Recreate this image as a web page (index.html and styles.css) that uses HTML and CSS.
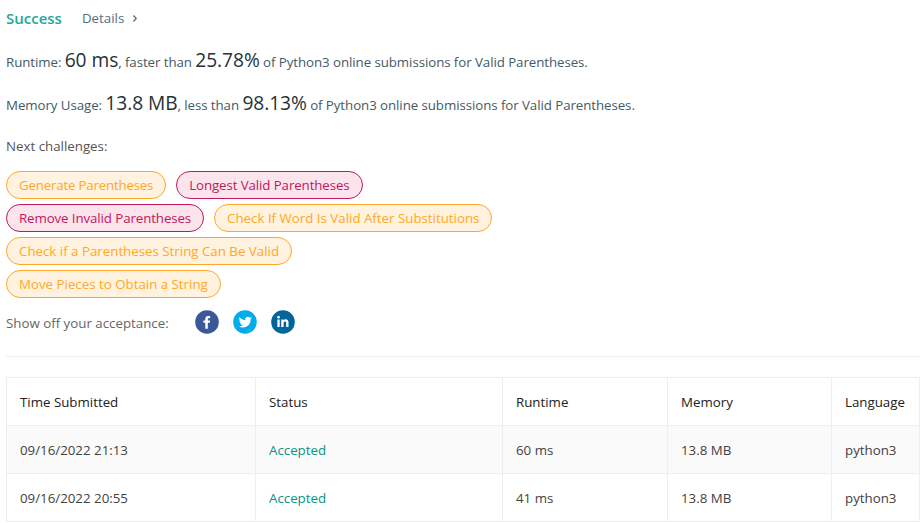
FILE: index.html
```html
<!DOCTYPE html>
<html lang="en">
<head>
  <meta charset="UTF-8">
  <meta name="viewport" content="width=device-width, initial-scale=1.0">
  <title>Submission Result</title>
  <link rel="stylesheet" href="styles.css">
</head>
<body>
  <div class="result">
    <div class="result-header">
      <span class="success">Success</span>
      <a class="details">Details
        <svg width="6" height="8" viewBox="0 0 6 8"><path d="M1.5 1.500 L4.2 4.500 L1.5 7.500" fill="none" stroke="currentColor" stroke-width="1.3"/></svg>
      </a>
    </div>
    <p class="info">Runtime: <span class="data">60 ms</span>, faster than <span class="data">25.78%</span> of Python3 online submissions for Valid Parentheses.</p>
    <p class="info">Memory Usage: <span class="data">13.8 MB</span>, less than <span class="data">98.13%</span> of Python3 online submissions for Valid Parentheses.</p>
    <p class="next">Next challenges:</p>
    <div class="challenges">
      <a class="tag medium tighter">Generate Parentheses</a>
      <a class="tag hard tight">Longest Valid Parentheses</a>
      <a class="tag hard tight">Remove Invalid Parentheses</a>
      <a class="tag medium">Check If Word Is Valid After Substitutions</a>
      <a class="tag medium">Check if a Parentheses String Can Be Valid</a>
      <a class="tag medium">Move Pieces to Obtain a String</a>
    </div>
    <div class="share">
      <span class="share-label">Show off your acceptance:</span>
      <svg class="social" viewBox="0 0 24 24">
        <circle cx="12" cy="12" r="11.8" fill="#3b5998"/>
        <path d="M10.3 18.8v-6H8.4v-2.300h1.900V9c0-2 1-3 2.900-3h1.900v2.200h-1.300c-.7 0-1 .3-1 1v1.300h2.300l-.3 2.300h-2v6z" fill="#fff"/>
      </svg>
      <svg class="social" viewBox="0 0 24 24">
        <circle cx="12" cy="12" r="11.8" fill="#00aced"/>
        <path transform="translate(5.200 5.200) scale(.58)" d="M23.6 4.9c-.8.4-1.7.6-2.7.8 1-.6 1.700-1.500 2.100-2.600-.9.5-1.900.9-3 1.100a4.700 4.700 0 0 0-8 4.300C8 8.300 4.600 6.400 2.300 3.600c-1.200 2.100-.6 4.800 1.500 6.200-.8 0-1.500-.2-2.100-.6 0 2.200 1.500 4.200 3.800 4.700-.7.2-1.400.2-2.100.1.600 1.900 2.300 3.200 4.400 3.300A9.500 9.500 0 0 1 .8 19.200 13.400 13.400 0 0 0 21.300 7.300c.9-.6 1.700-1.500 2.300-2.400z" fill="#fff"/>
      </svg>
      <svg class="social" viewBox="0 0 24 24">
        <circle cx="12" cy="12" r="11.8" fill="#006699"/>
        <path d="M6.400 9.500h2.300v7.500H6.400zM10.200 9.500h2.200v1c.5-.8 1.200-1.200 2.200-1.200 2.100 0 2.900 1.300 2.900 3.300V17h-2.300v-4c0-1-.4-1.600-1.200-1.600-.9 0-1.400.6-1.400 1.700V17h-2.400z" fill="#fff"/>
        <circle cx="7.550" cy="7.200" r="1.350" fill="#fff"/>
      </svg>
    </div>
  </div>

  <table class="submissions">
    <thead>
      <tr>
        <th class="col-time">Time Submitted</th>
        <th class="col-status">Status</th>
        <th class="col-runtime">Runtime</th>
        <th class="col-memory">Memory</th>
        <th class="col-lang">Language</th>
      </tr>
    </thead>
    <tbody>
      <tr>
        <td>09/16/2022 21:13</td>
        <td><a class="accepted">Accepted</a></td>
        <td>60 ms</td>
        <td>13.8 MB</td>
        <td>python3</td>
      </tr>
      <tr>
        <td>09/16/2022 20:55</td>
        <td><a class="accepted">Accepted</a></td>
        <td>41 ms</td>
        <td>13.8 MB</td>
        <td>python3</td>
      </tr>
    </tbody>
  </table>
</body>
</html>
```
FILE: styles.css
```css
* {
  box-sizing: border-box;
}

body {
  margin: 0;
  padding: 0 3px 0 6px;
  height: 523px;
  overflow: hidden;
  background-color: #fff;
  color: #546e7a;
  font-family: "Open Sans", "Noto Sans", sans-serif;
  font-size: 13.3px;
}

.result {
  height: 357px;
  border-bottom: 1px solid #eee;
}

.result-header {
  display: flex;
  align-items: center;
  gap: 20px;
  height: 36px;
}

.success {
  color: #26a69a;
  font-size: 15px;
  font-weight: 600;
}

.details {
  display: flex;
  align-items: center;
  gap: 8px;
}

.info {
  margin: 0;
  height: 43px;
  line-height: 48px;
  color: #455a64;
  letter-spacing: -0.07px;
  white-space: nowrap;
}

.data {
  color: #263238;
  font-size: 19.2px;
}

.next {
  margin: 0;
  height: 49px;
  line-height: 48px;
  color: #555;
}

.challenges {
  display: flex;
  flex-wrap: wrap;
  gap: 5px 10px;
  width: 500px;
}

.tag {
  height: 28px;
  padding: 0 12px;
  border: 1px solid;
  border-radius: 14px;
  line-height: 26px;
  white-space: nowrap;
}

.tight {
  letter-spacing: -0.1px;
}

.tighter {
  letter-spacing: -0.2px;
}

.medium {
  border-color: #ffa726;
  background-color: #fff3e0;
  color: #ffa726;
}

.hard {
  border-color: #c2185b;
  background-color: #fce4ec;
  color: #c2185b;
}

.share {
  display: flex;
  align-items: center;
  gap: 14px;
  height: 48px;
}

.share-label {
  width: 175px;
  padding-top: 1px;
  color: #666;
  white-space: nowrap;
}

.social {
  width: 24px;
  height: 24px;
}

.submissions {
  width: 914px;
  margin-top: 20px;
  border-collapse: collapse;
  table-layout: fixed;
  color: #424242;
}

th,
td {
  height: 48px;
  padding: 0 13px;
  border: 1px solid #eee;
  font-weight: 400;
  text-align: left;
}

th {
  color: #212121;
}

tbody tr:nth-child(odd) {
  background-color: #fafafa;
}

.col-time {
  width: 249px;
}

.col-status {
  width: 247px;
}

.col-runtime {
  width: 165px;
}

.col-memory {
  width: 164px;
}

.accepted {
  color: #009688;
}
```
